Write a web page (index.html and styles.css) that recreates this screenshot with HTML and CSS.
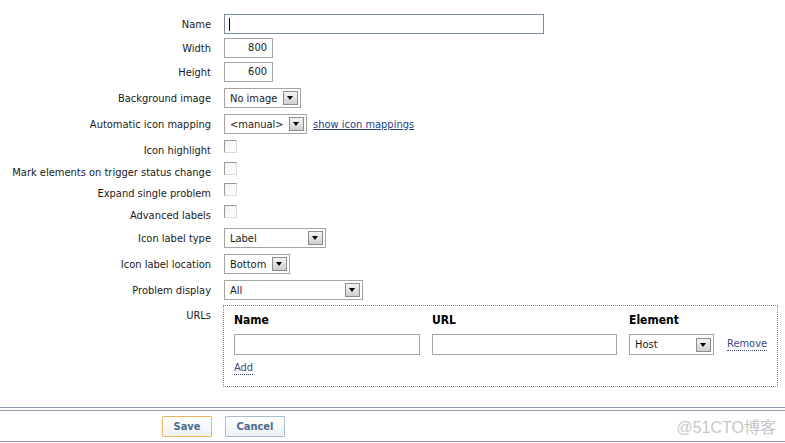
FILE: index.html
```html
<!DOCTYPE html>
<html>
<head>
<meta charset="utf-8">
<link rel="stylesheet" href="styles.css">
</head>
<body>
<div class="form">
  <div class="row r-input">
    <div class="label">Name</div>
    <div class="field"><div class="input name-input"><span class="caret"></span></div></div>
  </div>
  <div class="row r-input gap4">
    <div class="label">Width</div>
    <div class="field"><div class="input num">800</div></div>
  </div>
  <div class="row r-input gap4">
    <div class="label">Height</div>
    <div class="field"><div class="input num">600</div></div>
  </div>
  <div class="row r-input gap6">
    <div class="label">Background image</div>
    <div class="field"><div class="select w77"><span class="val">No image</span><span class="arrow"></span></div></div>
  </div>
  <div class="row r-input gap6">
    <div class="label">Automatic icon mapping</div>
    <div class="field"><div class="select w83"><span class="val">&lt;manual&gt;</span><span class="arrow"></span></div><a class="link" href="#">show icon mappings</a></div>
  </div>
  <div class="row r-check gap6 h22">
    <div class="label">Icon highlight</div>
    <div class="field"><span class="check"></span></div>
  </div>
  <div class="row r-check h21">
    <div class="label">Mark elements on trigger status change</div>
    <div class="field"><span class="check"></span></div>
  </div>
  <div class="row r-check h22">
    <div class="label">Expand single problem</div>
    <div class="field"><span class="check"></span></div>
  </div>
  <div class="row r-check h23">
    <div class="label">Advanced labels</div>
    <div class="field"><span class="check"></span></div>
  </div>
  <div class="row r-input">
    <div class="label">Icon label type</div>
    <div class="field"><div class="select w102"><span class="val">Label</span><span class="arrow"></span></div></div>
  </div>
  <div class="row r-input gap6">
    <div class="label">Icon label location</div>
    <div class="field"><div class="select w66"><span class="val">Bottom</span><span class="arrow"></span></div></div>
  </div>
  <div class="row r-input gap6">
    <div class="label">Problem display</div>
    <div class="field"><div class="select w139"><span class="val">All</span><span class="arrow"></span></div></div>
  </div>
  <div class="row r-urls">
    <div class="label urls-label">URLs</div>
    <div class="urls">
      <div class="url-grid">
        <div class="th">Name</div>
        <div class="th">URL</div>
        <div class="th">Element</div>
        <div></div>
        <div class="input url-input"></div>
        <div class="input url-input"></div>
        <div class="select w85"><span class="val">Host</span><span class="arrow"></span></div>
        <a class="dlink remove" href="#">Remove</a>
      </div>
      <a class="dlink add" href="#">Add</a>
    </div>
  </div>
</div>
<div class="footer">
  <div class="footer-inner">
    <div class="btn-cell"><button class="btn save">Save</button></div>
    <button class="btn cancel">Cancel</button>
    <span class="watermark">@51CTO博客</span>
  </div>
</div>
</body>
</html>
```
FILE: styles.css
```css
html, body {
  margin: 0;
  padding: 0;
  background: #ffffff;
}
body {
  font-family: "DejaVu Sans Condensed", "DejaVu Sans", sans-serif;
  font-size: 11px;
  color: #1a1a1a;
  width: 785px;
  height: 443px;
  overflow: hidden;
}
.form {
  padding-top: 14px;
  height: 387px;
  box-sizing: border-box;
}
.row {
  display: flex;
  column-gap: 13px;
}
.label {
  width: 211px;
  flex: none;
  text-align: right;
  line-height: 14px;
}
.field {
  display: flex;
  align-items: center;
  gap: 6px;
}
.r-input {
  align-items: flex-start;
  height: 20px;
}
.r-input .label { padding-top: 4px; }
.gap4 { margin-top: 4px; }
.gap6 { margin-top: 6px; }
.r-check { align-items: flex-start; }
.r-check .label { padding-top: 4px; }
.h21 { height: 21px; }
.h22 { height: 22px; }
.h23 { height: 23px; }

.input {
  box-sizing: border-box;
  height: 20px;
  border: 1px solid #a4a4a4;
  background: #fff;
  line-height: 18px;
  padding: 0 4px;
}
.name-input {
  width: 320px;
  border-color: #7a89a8;
  display: flex;
  align-items: center;
}
.caret {
  display: block;
  width: 1px;
  height: 13px;
  background: #000;
}
.num {
  width: 49px;
  text-align: right;
  padding-right: 5px;
}

.select {
  box-sizing: border-box;
  height: 20px;
  border: 1px solid #a4a4a4;
  background: #fff;
  display: flex;
  align-items: center;
  justify-content: space-between;
  padding: 0 2px 0 5px;
  flex: none;
}
.select .val { line-height: 14px; padding-top: 1px; }
.arrow {
  box-sizing: border-box;
  width: 15px;
  height: 14px;
  border: 1px solid #8c8c8c;
  background: linear-gradient(#f4f4f4, #cfcfcf);
  position: relative;
  flex: none;
}
.arrow::after {
  content: "";
  position: absolute;
  left: 3px;
  top: 4px;
  border-left: 3.5px solid transparent;
  border-right: 3.5px solid transparent;
  border-top: 4px solid #000;
}
.w77 { width: 77px; }
.w83 { width: 83px; }
.w102 { width: 102px; }
.w66 { width: 66px; }
.w139 { width: 139px; }
.w85 { width: 85px; }

.link {
  color: #24408a;
  text-decoration: underline;
  padding-top: 1px;
}
.check {
  display: block;
  box-sizing: border-box;
  width: 13px;
  height: 13px;
  border: 1px solid #dcdcdc;
  border-top-color: #9a9a9a;
  border-left-color: #9a9a9a;
  background: linear-gradient(135deg, #f1f1f1, #ffffff);
}

.r-urls {
  margin-top: 5px;
  align-items: flex-start;
}
.urls-label { padding-top: 4px; }
.urls {
  margin-left: -1px;
  box-sizing: border-box;
  width: 555px;
  height: 82px;
  border: 1px dotted #8a8a8a;
  padding: 7px 10px 0 10px;
}
.url-grid {
  display: grid;
  grid-template-columns: 186px 185px 85px auto;
  column-gap: 12px;
  row-gap: 6px;
  align-items: center;
}
.url-grid .th {
  font-weight: bold;
  font-size: 12px;
  color: #000;
  line-height: 15px;
}
.url-input { width: 100%; height: 21px; }
.url-grid .select { height: 21px; }
.remove { margin-left: 1px; justify-self: start; }
.dlink {
  color: #3c4a7a;
  text-decoration: none;
  border-bottom: 1px dotted #3c4a7a;
  line-height: 12px;
}
.add {
  display: inline-block;
  margin-top: 7px;
}

.footer {
  margin-top: 20px;
  border-top: 1px solid #8d9cb0;
  padding-top: 2px;
}
.footer-inner {
  border-top: 1px solid #8d9cb0;
  border-bottom: 1px solid #8d9cb0;
  height: 30px;
  display: flex;
  align-items: center;
  column-gap: 13px;
}
.btn-cell {
  width: 212px;
  display: flex;
  justify-content: flex-end;
}
.btn {
  font-family: "DejaVu Sans Condensed", "DejaVu Sans", sans-serif;
  font-size: 11px;
  font-weight: bold;
  color: #4c6c8e;
  height: 21px;
  background: linear-gradient(#ffffff, #eef2f6);
  border: 1px solid #a9bacb;
  border-radius: 1px;
  padding: 0;
}
.save { width: 50px; border-color: #f0b45c; }
.cancel { width: 60px; }
.watermark {
  margin-left: auto;
  margin-right: 9px;
  font-family: "Liberation Sans", "Noto Sans CJK SC", sans-serif;
  font-size: 16px;
  color: #c8c8c8;
}
```
